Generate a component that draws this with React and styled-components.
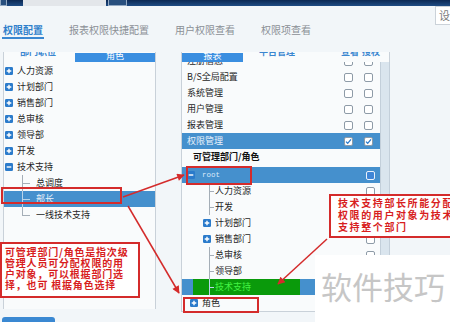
import React from "react";
import styled, { createGlobalStyle } from "styled-components";

const GlobalStyle = createGlobalStyle`
  html, body { margin: 0; padding: 0; }
  body {
    background: #f2f6f9;
    font-family: "Noto Sans CJK SC", "Noto Sans", "Liberation Sans", sans-serif;
    color: #1e1e1e;
  }
`;

const tabs = ["权限配置", "报表权限快捷配置", "用户权限查看", "权限项查看"];

const departments = [
  { label: "人力资源", icon: "plus" },
  { label: "计划部门", icon: "plus" },
  { label: "销售部门", icon: "plus" },
  { label: "总审核", icon: "plus" },
  { label: "领导部", icon: "plus" },
  { label: "开发", icon: "plus" },
  { label: "技术支持", icon: "minus" },
  { label: "总调度", child: true },
  { label: "部长", child: true, active: true },
  { label: "一线技术支持", child: true, last: true },
];

const modules = [
  { label: "注册信息" },
  { label: "B/S全局配置" },
  { label: "系统管理" },
  { label: "用户管理" },
  { label: "报表管理" },
  { label: "权限管理", active: true },
];

const targets = [
  { label: "人力资源", connector: true },
  { label: "开发", connector: true },
  { label: "计划部门", icon: "plus" },
  { label: "销售部门", icon: "plus" },
  { label: "总审核", connector: true },
  { label: "领导部", connector: true },
];

const Toggle = ({ open }) => (
  <ToggleIcon viewBox="0 0 8 8">
    <rect width="8" height="8" rx="1.3" fill="#2b7bcb" />
    <path
      d={open ? "M1.7 4h4.6" : "M1.7 4h4.6M4 1.7v4.6"}
      stroke="#fff"
      strokeWidth="1.4"
    />
  </ToggleIcon>
);

const Check = ({ on, filled }) => (
  <Box $filled={filled}>
    {on && (
      <svg width="7" height="7" viewBox="0 0 7 7">
        <path d="M1 3.6l1.7 1.7L6 1.4" fill="none" stroke="#2a7acb" strokeWidth="1.3" />
      </svg>
    )}
  </Box>
);

export default function App() {
  return (
    <>
      <GlobalStyle />
      <Page>
        <TopBar>
          <BarBox $w={7} />
          <BarBox $w={83} $ml={16} $light />
          <BarBox $w={19} $ml={2} />
        </TopBar>

        <TabRow>
          {tabs.map((t, i) => (
            <Tab key={t} $active={i === 0}>
              {t}
            </Tab>
          ))}
          <SearchBox>设置</SearchBox>
        </TabRow>

        <Content>
          <LeftPanel>
            <PanelHead>
              <HeadLabel $pl={16}>部门职位</HeadLabel>
              <HeadTab $w={80}>
                <span>角色</span>
              </HeadTab>
            </PanelHead>
            <List $pt={1}>
              {departments.map((d) => (
                <Row
                  key={d.label}
                  $indent={d.child ? 16 : 1}
                  $active={d.active}
                  $bleed={d.active ? 4 : 0}
                >
                  {d.child ? (
                    <Connector $w={16} $x={2} $len={8} $last={d.last} $light={d.active} />
                  ) : (
                    <Slot>
                      <Toggle open={d.icon === "minus"} />
                    </Slot>
                  )}
                  <Label>{d.label}</Label>
                </Row>
              ))}
            </List>
          </LeftPanel>

          <MidPanel>
            <MidHead>
              <HeadTab $w={61}>
                <span>报表</span>
              </HeadTab>
              <HeadLabel $pl={16}>平台管理</HeadLabel>
              <HeadLabel $pl={46}>查看</HeadLabel>
              <HeadLabel $pl={3}>授权</HeadLabel>
            </MidHead>
            <MidBody>
              <List $pt={0}>
                <Shift>
                  {modules.map((m) => (
                    <Row key={m.label} $indent={5} $active={m.active}>
                      <Label>{m.label}</Label>
                      <Checks $gap={11} $mr={7}>
                        <Check on={m.active} />
                        <Check on={m.active} />
                      </Checks>
                    </Row>
                  ))}
                  <SectionTitle>可管理部门/角色</SectionTitle>
                  <Row $indent={5} $active>
                    <Slot $w={15}>
                      <Toggle open />
                    </Slot>
                    <Mono>root</Mono>
                    <Checks $mr={5}>
                      <Check filled />
                    </Checks>
                  </Row>
                  {targets.map((t) => (
                    <Row key={t.label} $indent={21}>
                      {t.connector ? (
                        <Connector $w={12} $x={6} $len={5} />
                      ) : (
                        <Slot>
                          <Toggle />
                        </Slot>
                      )}
                      <Label>{t.label}</Label>
                      <Checks $mr={5}>
                        <Check />
                      </Checks>
                    </Row>
                  ))}
                  <Row $indent={11} $active>
                    <GreenMark>
                      <Connector $w={12} $x={6} $len={5} $light />
                      <span>技术支持</span>
                    </GreenMark>
                  </Row>
                  <Row $indent={8}>
                    <Slot>
                      <Toggle />
                    </Slot>
                    <Label>角色</Label>
                  </Row>
                </Shift>
              </List>
              <ScrollTrack />
            </MidBody>
          </MidPanel>
        </Content>

        <Footer>
          <FooterButton />
        </Footer>

        <Frame $x={1} $y={187} $w={121} $h={17} />
        <Frame $x={186} $y={166} $w={66} $h={19} />
        <Frame $x={183} $y={297} $w={76} $h={16} />

        <Callout $x={0} $y={242} $w={140} $h={56} $lh={11} $ls={0.8} $pad="2px 0 0 3px">
          {"可管理部门/角色是指次级\n管理人员可分配权限的用\n户对象，可以根据部门选\n择，也可 根据角色选择"}
        </Callout>
        <Callout $x={329} $y={194} $w={130} $h={44} $lh={12} $ls={1.6} $pad="1px 0 0 7px">
          {"技术支持部长所能分配\n权限的用户对象为技术\n支持整个部门"}
        </Callout>

        <Arrows viewBox="0 0 450 322">
          <defs>
            <marker
              id="head"
              viewBox="0 0 10 10"
              refX="9"
              refY="5"
              markerWidth="6"
              markerHeight="5"
              orient="auto"
            >
              <path d="M0 0L10 5L0 10z" fill="#d42b2b" />
            </marker>
          </defs>
          <line x1="123" y1="197" x2="184" y2="175" markerEnd="url(#head)" />
          <line x1="128" y1="206" x2="179" y2="293" markerEnd="url(#head)" />
          <line x1="327" y1="239" x2="278" y2="284" markerEnd="url(#head)" />
        </Arrows>

        <Watermark>软件技巧</Watermark>
      </Page>
    </>
  );
}

const Page = styled.div`
  position: relative;
  width: 450px;
  height: 322px;
  overflow: hidden;
  background: #f2f6f9;
`;

const TopBar = styled.div`
  height: 6px;
  display: flex;
  background: linear-gradient(#0c2853, #1f4c84);
`;

const BarBox = styled.div`
  width: ${(p) => p.$w}px;
  margin-left: ${(p) => p.$ml || 0}px;
  box-sizing: border-box;
  background: ${(p) => (p.$light ? "#e3e6ea" : "#284f7e")};
  border: ${(p) => (p.$light ? "none" : "1px solid #93a9c3")};
  border-top: none;
`;

const TabRow = styled.div`
  height: 44px;
  display: flex;
  align-items: flex-start;
  padding-left: 2px;
`;

const Tab = styled.div`
  margin-top: 17px;
  margin-right: 24px;
  padding: 0 1px;
  font-size: 10px;
  line-height: 14px;
  white-space: nowrap;
  color: ${(p) => (p.$active ? "#2f7fcb" : "#8b9096")};
  font-weight: ${(p) => (p.$active ? "bold" : "normal")};
  border-bottom: 2px solid ${(p) => (p.$active ? "#3a87d1" : "transparent")};
`;

const SearchBox = styled.div`
  margin-left: auto;
  margin-right: -20px;
  width: 35px;
  height: 19px;
  flex: none;
  box-sizing: border-box;
  border: 1px solid #cbd2d9;
  border-right: none;
  background: #fff;
  color: #7a7a7a;
  font-size: 11px;
  line-height: 17px;
  padding-left: 3px;
  white-space: nowrap;
  overflow: hidden;
`;

const Content = styled.div`
  height: 263px;
  display: flex;
  align-items: flex-start;
  padding-top: 2px;
  box-sizing: border-box;
`;

const LeftPanel = styled.div`
  margin-left: 3px;
  width: 153px;
  height: 257px;
  box-sizing: border-box;
  border-left: 1px solid #c9d1d9;
  border-right: 1px solid #c9d1d9;
  background: #f9fbfc;
  display: flex;
  flex-direction: column;
`;

const PanelHead = styled.div`
  height: 10px;
  flex: none;
  display: flex;
  justify-content: space-between;
  overflow: hidden;
`;

const MidHead = styled(PanelHead)`
  justify-content: flex-start;
  width: 208px;
  border-right: 1px solid #c9d1d9;
  box-sizing: border-box;
`;

const HeadLabel = styled.span`
  padding-left: ${(p) => p.$pl || 0}px;
  margin-top: -5px;
  font-size: 9px;
  line-height: 10px;
  font-weight: bold;
  color: #3a86d0;
  white-space: nowrap;
`;

const HeadTab = styled.span`
  flex: none;
  width: ${(p) => p.$w}px;
  height: 9px;
  margin-top: 1px;
  background: #3a8ee0;
  color: #fff;
  font-size: 9px;
  line-height: 5px;
  text-align: center;
  overflow: hidden;
`;

const List = styled.div`
  flex: 1;
  min-width: 0;
  padding-top: ${(p) => p.$pt}px;
  overflow: hidden;
`;

const Shift = styled.div`
  margin-top: -9px;
`;

const Row = styled.div`
  display: flex;
  align-items: center;
  height: 16px;
  margin-left: -${(p) => p.$bleed || 0}px;
  padding-left: ${(p) => (p.$indent || 0) + (p.$bleed || 0)}px;
  font-size: 9px;
  line-height: 16px;
  white-space: nowrap;
  background: ${(p) => (p.$active ? "#4590cd" : "transparent")};
  color: ${(p) => (p.$active ? "#e9f2fb" : "#1e1e1e")};
`;

const Slot = styled.span`
  flex: none;
  width: ${(p) => p.$w || 12}px;
  display: flex;
  align-items: center;
`;

const ToggleIcon = styled.svg`
  width: 8px;
  height: 8px;
  display: block;
`;

const Connector = styled.span`
  flex: none;
  align-self: stretch;
  width: ${(p) => p.$w}px;
  --line: ${(p) => (p.$light ? "#b9d4ea" : "#a5aeb7")};
  background:
    linear-gradient(var(--line), var(--line)) ${(p) => p.$x}px 0 /
      1px ${(p) => (p.$last ? "8px" : "100%")} no-repeat,
    linear-gradient(var(--line), var(--line)) ${(p) => p.$x}px 8px /
      ${(p) => p.$len}px 1px no-repeat;
`;

const Label = styled.span`
  flex: 1;
  overflow: hidden;
`;

const Mono = styled.span`
  flex: 1;
  font-family: "Liberation Mono", "DejaVu Sans Mono", monospace;
  font-size: 7.5px;
  color: #dbe9fa;
`;

const Checks = styled.span`
  display: flex;
  gap: ${(p) => p.$gap || 0}px;
  margin-right: ${(p) => p.$mr}px;
`;

const Box = styled.span`
  width: 9px;
  height: 9px;
  box-sizing: border-box;
  border-radius: 2px;
  border: 1px solid ${(p) => (p.$filled ? "#e8f1fb" : "#8e9ba7")};
  background: ${(p) => (p.$filled ? "#3f86d6" : "#fff")};
  display: flex;
  align-items: center;
  justify-content: center;
`;

const SectionTitle = styled.div`
  height: 18px;
  padding-left: 11px;
  font-size: 9px;
  line-height: 16px;
  font-weight: bold;
  color: #111;
`;

const GreenMark = styled.span`
  align-self: stretch;
  width: 97px;
  padding-left: 10px;
  display: flex;
  align-items: center;
  background: #0a9a0b;
  color: #44f244;
`;

const MidPanel = styled.div`
  margin-left: 25px;
  width: 209px;
  height: 260px;
  box-sizing: border-box;
  border-left: 1px solid #c9d1d9;
  border-bottom: 1px solid #c9d1d9;
  background: #f9fbfc;
  display: flex;
  flex-direction: column;
`;

const MidBody = styled.div`
  flex: 1;
  display: flex;
  min-height: 0;
`;

const ScrollTrack = styled.div`
  width: 10px;
  flex: none;
  box-sizing: border-box;
  background: #dae5ee;
  border-left: 1px solid #c3cfda;
  border-right: 1px solid #c3cfda;
`;

const Footer = styled.div`
  height: 9px;
  padding: 4px 0 0 2px;
`;

const FooterButton = styled.div`
  width: 53px;
  height: 10px;
  border-radius: 3px 3px 0 0;
  background: #3a88d2;
`;

const Frame = styled.div`
  position: absolute;
  left: ${(p) => p.$x}px;
  top: ${(p) => p.$y}px;
  width: ${(p) => p.$w}px;
  height: ${(p) => p.$h}px;
  box-sizing: border-box;
  border: 2px solid #d42b2b;
`;

const Callout = styled.div`
  position: absolute;
  left: ${(p) => p.$x}px;
  top: ${(p) => p.$y}px;
  width: ${(p) => p.$w}px;
  height: ${(p) => p.$h}px;
  box-sizing: border-box;
  padding: ${(p) => p.$pad};
  border: 2px solid #d42b2b;
  background: #fff;
  color: #d81e1e;
  font-size: 10px;
  font-weight: bold;
  line-height: ${(p) => p.$lh}px;
  letter-spacing: ${(p) => p.$ls}px;
  white-space: pre;
`;

const Arrows = styled.svg`
  position: absolute;
  left: 0;
  top: 0;
  width: 450px;
  height: 322px;
  pointer-events: none;

  line {
    stroke: #d42b2b;
    stroke-width: 1.5;
  }
`;

const Watermark = styled.div`
  position: absolute;
  left: 315px;
  top: 255px;
  width: 135px;
  height: 67px;
  box-sizing: border-box;
  padding-left: 6px;
  background: #fff;
  color: #c6c6c6;
  font-size: 31px;
  line-height: 62px;
  white-space: nowrap;
`;
